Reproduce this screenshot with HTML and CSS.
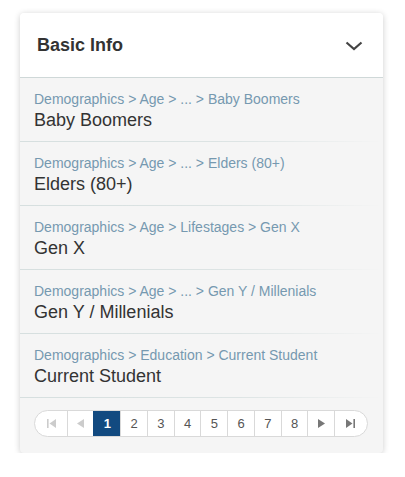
FILE: index.html
```html
<!DOCTYPE html>
<html lang="en">
<head>
  <meta charset="UTF-8">
  <title>Basic Info</title>
  <link rel="stylesheet" href="styles.css">
</head>
<body>

  <div class="panel">
    <div class="panel-header">
      <h2>Basic Info</h2>
      <svg class="chevron" width="18" height="10" viewBox="0 0 18 10">
        <path d="M1.5 1.5 L9 8 L16.5 1.5" fill="none" stroke="#444" stroke-width="2.2"/>
      </svg>
    </div>

    <ul class="lista">
      <li>
        <div class="ruta">Demographics &gt; Age &gt; ... &gt; Baby Boomers</div>
        <div class="nombre">Baby Boomers</div>
      </li>
      <li>
        <div class="ruta">Demographics &gt; Age &gt; ... &gt; Elders (80+)</div>
        <div class="nombre">Elders (80+)</div>
      </li>
      <li>
        <div class="ruta">Demographics &gt; Age &gt; Lifestages &gt; Gen X</div>
        <div class="nombre">Gen X</div>
      </li>
      <li>
        <div class="ruta">Demographics &gt; Age &gt; ... &gt; Gen Y / Millenials</div>
        <div class="nombre">Gen Y / Millenials</div>
      </li>
      <li>
        <div class="ruta">Demographics &gt; Education &gt; Current Student</div>
        <div class="nombre">Current Student</div>
      </li>
    </ul>

    <div class="paginador">
      <div class="paginas">
        <span class="pag primera off">
          <svg width="9" height="9" viewBox="0 0 9 9"><rect x="0" y="0" width="1.6" height="9" fill="#ccc"/><path d="M9 0 L2.5 4.5 L9 9 Z" fill="#ccc"/></svg>
        </span>
        <span class="pag off">
          <svg width="7" height="9" viewBox="0 0 7 9"><path d="M7 0 L0 4.5 L7 9 Z" fill="#ccc"/></svg>
        </span>
        <span class="pag activa">1</span>
        <span class="pag">2</span>
        <span class="pag">3</span>
        <span class="pag">4</span>
        <span class="pag">5</span>
        <span class="pag">6</span>
        <span class="pag">7</span>
        <span class="pag">8</span>
        <span class="pag">
          <svg width="7" height="9" viewBox="0 0 7 9"><path d="M0 0 L7 4.5 L0 9 Z" fill="#777"/></svg>
        </span>
        <span class="pag ultima">
          <svg width="9" height="9" viewBox="0 0 9 9"><path d="M0 0 L6.5 4.5 L0 9 Z" fill="#777"/><rect x="7.4" y="0" width="1.6" height="9" fill="#777"/></svg>
        </span>
      </div>
    </div>
  </div>

</body>
</html>
```

FILE: styles.css
```css
body {
  font-family: "Liberation Sans", Arial, sans-serif;
  background-color: #fff;
  margin: 0;
  padding: 13px 0 0 20px;
}
.panel {
  width: 363px;
  background-color: #f5f5f5;
  border-radius: 4px;
  box-shadow: 0 1px 6px rgba(0,0,0,0.2);
  overflow: hidden;
}
.panel-header {
  height: 64px;
  background-color: #fff;
  border-bottom: 1px solid #cfd8d8;
  display: flex;
  align-items: center;
  justify-content: space-between;
  padding: 0 20px 0 17px;
}
.panel-header h2 {
  margin: 0;
  font-size: 18px;
  font-weight: bold;
  color: #333;
}
.chevron {
  margin-top: 1px;
}
.lista {
  list-style: none;
  margin: 0;
  padding: 0;
}
.lista li {
  height: 63px;
  padding: 0 14px;
  display: flex;
  flex-direction: column;
  justify-content: center;
  background-image: linear-gradient(to right, #d6dfdf 0%, #dde4e4 60%, rgba(245,245,245,0) 100%);
  background-size: 100% 1px;
  background-repeat: no-repeat;
  background-position: bottom left;
  padding-bottom: 1px;
}
.ruta {
  font-size: 14px;
  color: #7699b0;
  line-height: 17px;
  margin-top: 2px;
}
.nombre {
  font-size: 18px;
  color: #333;
  line-height: 22px;
  margin-top: 1px;
}
.paginador {
  padding: 12px 15px 16px 14px;
}
.paginas {
  display: flex;
  height: 25px;
  border: 1px solid #d9d9d9;
  border-radius: 14px;
  background-color: #fff;
  overflow: hidden;
}
.pag {
  width: 26px;
  border-left: 1px solid #d9d9d9;
  display: flex;
  align-items: center;
  justify-content: center;
  font-size: 13px;
  color: #555;
}
.pag.primera {
  width: 31px;
  border-left: none;
  padding-left: 1px;
}
.pag.ultima {
  width: 30px;
  padding-right: 2px;
}
.pag.activa {
  background-color: #124a80;
  border-left-color: #124a80;
  color: #fff;
  font-weight: bold;
}
```
